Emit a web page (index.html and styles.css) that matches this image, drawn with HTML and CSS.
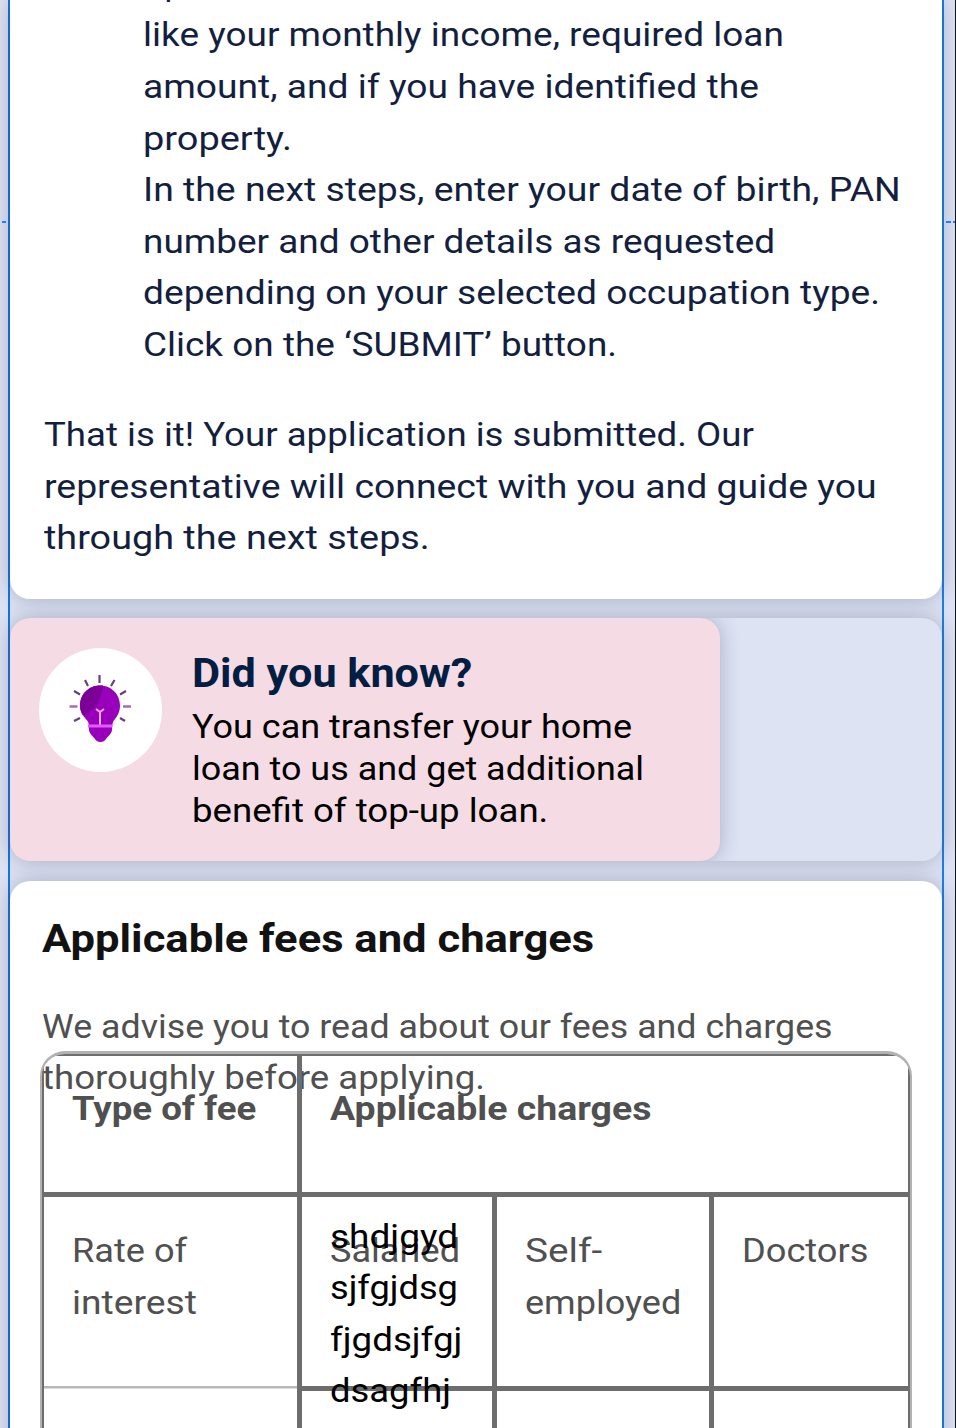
FILE: index.html
```html
<!DOCTYPE html>
<html lang="en">
<head>
<meta charset="utf-8">
<title>Home loan</title>
<link rel="stylesheet" href="styles.css">
</head>
<body>
<div class="frame">
  <i class="guide guide-left"></i><i class="guide guide-right"></i>
  <main class="artboard">
    <section class="card steps-card">
      <div class="steps">
        <p>Update details</p>
        <p class="s1">like your monthly income, required loan</p>
        <p class="s2">amount, and if you have identified the</p>
        <p class="s3">property.</p>
        <p class="s4">In the next steps, enter your date of birth, PAN</p>
        <p class="s5">number and other details as requested</p>
        <p class="s6">depending on your selected occupation type.</p>
        <p class="s7">Click on the ‘SUBMIT’ button.</p>
      </div>
      <div class="closing">
        <p class="c1">That is it! Your application is submitted. Our</p>
        <p class="c2">representative will connect with you and guide you</p>
        <p class="c3">through the next steps.</p>
      </div>
    </section>
    <section class="tips">
      <article class="tip">
        <div class="tip-icon">
          <svg viewBox="0 0 84 96" width="84" height="96">
            <g stroke="#684078" stroke-width="2.200"><path d="M39.500 15v8M25 20l3 6M54.500 20l-3.500 6M14 31l6 3.500M66 31l-6 3.500M65 61l-5-3M14 61l6-3"/><path stroke="#a070b0" stroke-width="2.600" d="M9.500 46.500h8M63 46.500h8"/></g>
            <path fill="#9800bb" d="M40 25.500c-11 0-20 8.500-20 20 0 8 5 12 7.500 15.500 2 3 1 5 1.500 9 .5 4 4 6 6 9 2 4 9 4 11 0 2-3 5.500-5 6-9 .5-4 0-6 1.500-9 2.500-3.500 6.500-7.500 6.500-15.500 0-11.500-9-20-20-20z"/>
            <path fill="#7c0098" d="M40 25.500c-11 0-20 8.500-20 20 0 4 1 7 3 10 9-3 18-12 20-30z"/>
            <path fill="none" stroke="#f0a8ff" stroke-width="2" d="M40 65V52M36 49l4 3 4-3"/>
            <path fill="none" stroke="#e25cff" stroke-width="3" d="M28 66h24"/>
          </svg>
        </div>
        <div class="tip-copy">
          <h3 class="k0">Did you know?</h3>
          <p class="k1">You can transfer your home</p>
          <p class="k2">loan to us and get additional</p>
          <p class="k3">benefit of top-up loan.</p>
        </div>
      </article>
    </section>
    <section class="card fees">
      <h2 class="f0">Applicable fees and charges</h2>
      <div class="fees-copy">
        <p class="f1">We advise you to read about our fees and charges</p>
        <p class="f2">thoroughly before applying.</p>
      </div>
      <div class="table"><div class="grid">
        <div class="cell head"><p class="t1">Type of fee</p></div>
        <div class="cell head wide"><p class="t2">Applicable charges</p></div>
        <div class="cell light"><p class="t3">Rate of</p><p class="t4">interest</p></div>
        <div class="cell"><p class="t5">Salaried</p>
          <div class="note"><p class="n1">shdjgyd</p><p class="n2">sjfgjdsg</p><p class="n3">fjgdsjfgj</p><p class="n4">dsagfhj</p></div>
        </div>
        <div class="cell"><p class="t6">Self-</p><p class="t7">employed</p></div>
        <div class="cell last"><p class="t8">Doctors</p></div>
        <div class="cell"></div><div class="cell"></div><div class="cell"></div><div class="cell last"></div>
      </div></div>
    </section>
  </main>
</div>
</body>
</html>
```
FILE: styles.css
```css
* { box-sizing: border-box; }
body, p, h2, h3 { margin: 0; }
body { background: #dde3f4; font-family: Roboto, "Liberation Sans", sans-serif; font-size: 34px; line-height: 51.6px; color: #141f3f; overflow: hidden; }
.frame { position: relative; width: 956px; height: 1428px; overflow: hidden; padding-left: 8px; border-right: 1px solid #151515; }
.artboard { position: relative; width: 936px; height: 1428px; border-left: 2px solid #1473e6; border-right: 2px solid #1b7fec; display: flex; flex-direction: column; }
.guide { position: absolute; top: 221px; height: 2px; z-index: 2; }
.guide-left { left: 2px; width: 4px; background: #1684ff; }
.guide-right { left: 946px; width: 9px; background: linear-gradient(90deg, #1684ff 5px, transparent 5px 7px, #1684ff 7px); }
.card, .tips, .tip { box-shadow: 0 0 20px rgba(30, 35, 60, .28); }
.card { background: #fff; flex: none; }
p, h2, h3 { white-space: nowrap; width: max-content; transform-origin: 0 50%; }
.steps-card { height: 599px; border-radius: 0 0 20px 20px; }
.steps { padding-left: 132.500px; margin-top: -42.2px; }
.closing { padding: 38.600px 0 0 34px; }
.tips { flex: none; height: 243px; margin: 19px 0 20px; border-radius: 20px; background: #dde3f3; overflow: hidden; }
.tip { width: 710px; height: 243px; border-radius: 20px; background: #f5dbe4; display: flex; padding: 30px 29px; gap: 30px; }
.tip-icon { width: 123px; height: 124px; flex: none; border-radius: 50%; background: #fff; display: flex; padding: 12px 0 0 21px; }
.tip-copy { color: #000; line-height: 41.800px; }
.tip h3 { font-size: 40px; line-height: 50px; font-weight: 700; color: #021e42; padding-top: 1px; margin-bottom: 7px; }
.fees { height: 600px; border-radius: 20px 20px 0 0; padding: 32px 30px 0; color: #505050; }
.fees h2 { font-size: 39px; line-height: 52px; font-weight: 700; color: #121212; margin-left: 2px; }
.fees-copy { padding: 35.500px 0 0 2px; }
.table { position: relative; width: 872px; height: 450px; margin-top: -52.700px; border: 2px solid #b2b2b2; border-top-width: 3px; border-radius: 25px; overflow: hidden; }
.grid { width: 868px; height: 445px; border: 2px solid #6d6d6d; display: grid; grid-template-columns: 258px 195px 217px 194px; grid-template-rows: 141px 194px 200px; }
.cell { border-right: 5px solid #6d6d6d; border-bottom: 5px solid #6d6d6d; padding: 28.200px 0 0 27.500px; position: relative; }
.head { font-weight: 700; padding-top: 27px; }
.wide { grid-column: 2 / 5; border-right: 0; }
.last { border-right: 0; }
.light { border-bottom: 0; background: linear-gradient(#b8b8b8, #b8b8b8) 0 189px / 100% 2.500px no-repeat; }
.note { position: absolute; left: 27.500px; top: 13.500px; color: #000; }

/* per-line width */
.s1 { transform: scaleX(1.088); }
.s2 { transform: scaleX(1.094); }
.s3 { transform: scaleX(1.116); }
.s4 { transform: scaleX(1.099); }
.s5 { transform: scaleX(1.087); }
.s6 { transform: scaleX(1.093); }
.s7 { transform: scaleX(1.087); }
.c1 { transform: scaleX(1.077); }
.c2 { transform: scaleX(1.099); }
.c3 { transform: scaleX(1.111); }
.k0 { transform: scaleX(1.08); }
.k1 { transform: scaleX(1.059); }
.k2 { transform: scaleX(1.057); }
.k3 { transform: scaleX(1.077); }
.f0 { transform: scaleX(1.117); }
.f1 { transform: scaleX(1.052); }
.f2 { transform: scaleX(1.077); }
.t1 { transform: scaleX(1.077); }
.t2 { transform: scaleX(1.102); }
.t3 { transform: scaleX(1.063); }
.t4 { transform: scaleX(1.095); }
.t5 { transform: scaleX(1.062); }
.t6 { transform: scaleX(1.14); }
.t7 { transform: scaleX(1.06); }
.t8 { transform: scaleX(1.065); }
.n1 { transform: scaleX(1.088); }
.n2 { transform: scaleX(1.065); }
.n3 { transform: scaleX(1.08); }
.n4 { transform: scaleX(1.07); }
```
